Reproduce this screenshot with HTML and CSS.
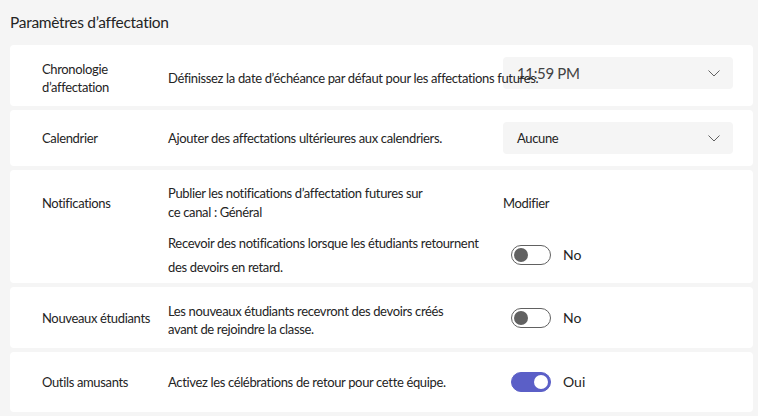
FILE: index.html
```html
<!DOCTYPE html>
<html lang="fr">
<head>
    <meta charset="UTF-8">
    <meta name="viewport" content="width=device-width, initial-scale=1.0">
    <title>Paramètres d'affectation</title>
    <link rel="stylesheet" href="styles.css">
</head>
<body>
    <h1 class="page-title">Paramètres d’affectation</h1>

    <div class="settings">
        <div class="card card-timeline">
            <div class="label">Chronologie<br>d’affectation</div>
            <div class="desc nowrap">Définissez la date d’échéance par défaut pour les affectations futures.</div>
            <div class="dropdown dropdown-top">
                <span class="time">11:59 PM</span>
                <svg class="chevron" width="12" height="7" viewBox="0 0 12 7"><path d="M0.5 0.5 L6 6 L11.5 0.5" fill="none" stroke="#616161" stroke-width="1"/></svg>
            </div>
        </div>

        <div class="card card-calendar">
            <div class="label">Calendrier</div>
            <div class="desc">Ajouter des affectations ultérieures aux calendriers.</div>
            <div class="dropdown">
                <span>Aucune</span>
                <svg class="chevron" width="12" height="7" viewBox="0 0 12 7"><path d="M0.5 0.5 L6 6 L11.5 0.5" fill="none" stroke="#616161" stroke-width="1"/></svg>
            </div>
        </div>

        <div class="card card-notif">
            <div class="label">Notifications</div>
            <div class="desc channel">Publier les notifications d’affectation futures sur ce canal : Général</div>
            <div class="control link">Modifier</div>
            <div class="desc tall">Recevoir des notifications lorsque les étudiants retournent des devoirs en retard.</div>
            <div class="control">
                <span class="toggle"><span class="knob"></span></span>
                <span class="toggle-text">No</span>
            </div>
        </div>

        <div class="card card-students">
            <div class="label">Nouveaux étudiants</div>
            <div class="desc students">Les nouveaux étudiants recevront des devoirs créés avant de rejoindre la classe.</div>
            <div class="control">
                <span class="toggle"><span class="knob"></span></span>
                <span class="toggle-text">No</span>
            </div>
        </div>

        <div class="card card-fun">
            <div class="label">Outils amusants</div>
            <div class="desc">Activez les célébrations de retour pour cette équipe.</div>
            <div class="control">
                <span class="toggle on"><span class="knob"></span></span>
                <span class="toggle-text">Oui</span>
            </div>
        </div>
    </div>
</body>
</html>
```

FILE: styles.css
```css
/* Page */
body {
    margin: 0;
    padding: 12px 5px 0 10px;
    background-color: #f5f5f5;
    font-family: "Lato", "Liberation Sans", sans-serif;
    font-size: 13px;
    letter-spacing: -0.35px;
    color: #242424;
}

.page-title {
    margin: 0 0 13px;
    font-size: 15.5px;
    font-weight: 400;
    line-height: 20px;
    letter-spacing: -0.3px;
}

.settings {
    display: flex;
    flex-direction: column;
    gap: 4px;
}

/* Cards */
.card {
    display: grid;
    grid-template-columns: 126px 335px 230px;
    align-items: center;
    padding: 12px 20px 12px 32px;
    background: #ffffff;
    border-radius: 4px;
}

.card-timeline {
    padding-top: 13px;
    padding-bottom: 8px;
    min-height: 40px;
}

.card-notif {
    padding-top: 14px;
    padding-bottom: 4px;
    row-gap: 9px;
}

.card-students {
    padding-top: 11px;
    padding-bottom: 10px;
}

.card-fun {
    padding-top: 20px;
    padding-bottom: 20px;
}

.label {
    line-height: 18px;
}

.desc {
    line-height: 19px;
}

/* overflows under the dropdown, like the original */
.desc.nowrap {
    position: relative;
    z-index: 1;
    white-space: nowrap;
}

.desc.channel {
    max-width: 262px;
}

.desc.tall {
    grid-column: 2;
    line-height: 24px;
    max-width: 330px;
}

.desc.students {
    max-width: 300px;
    padding-top: 4px;
    line-height: 18px;
}

/* Dropdowns */
.dropdown {
    display: flex;
    align-items: center;
    justify-content: space-between;
    height: 32px;
    padding: 0 13px 0 14px;
    background: #f5f5f5;
    border-radius: 4px;
}

.dropdown-top {
    align-self: start;
    margin-top: -1px;
}

.dropdown .time {
    font-size: 15px;
    color: #424242;
}

/* Toggles */
.control {
    display: flex;
    align-items: center;
    gap: 12px;
    padding-left: 8px;
    line-height: 20px;
}

.control.link {
    padding-left: 0;
}

.toggle {
    box-sizing: border-box;
    display: inline-flex;
    align-items: center;
    width: 40px;
    height: 20px;
    padding: 0 2px;
    border: 1px solid #616161;
    border-radius: 10px;
}

.knob {
    width: 14px;
    height: 14px;
    border-radius: 50%;
    background: #616161;
}

.toggle.on {
    justify-content: flex-end;
    background: #5b5fc7;
    border-color: #5b5fc7;
}

.toggle.on .knob {
    background: #ffffff;
}

.toggle-text {
    font-size: 14px;
    letter-spacing: 0;
}
```
